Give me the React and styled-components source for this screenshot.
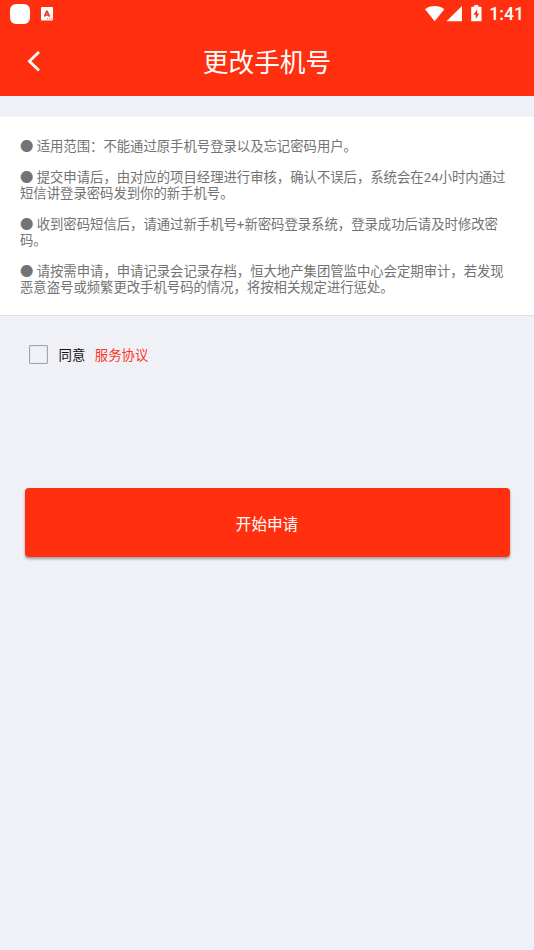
import React, { useState } from "react";
import styled, { createGlobalStyle } from "styled-components";

const GlobalStyle = createGlobalStyle`
  * {
    box-sizing: border-box;
  }

  body {
    margin: 0;
    background: #eff1f6;
    font-family: Roboto, "Noto Sans CJK SC", sans-serif;
  }
`;

const Page = styled.div`
  height: 950px;
  background: #eff1f6;
  overflow: hidden;
`;

const Header = styled.header`
  height: 96px;
  background: #ff2f0f;
  color: #fff;
`;

const StatusBar = styled.div`
  height: 27px;
  padding: 0 10px;
  display: flex;
  justify-content: space-between;
`;

const StatusGroup = styled.div`
  display: flex;
  align-items: center;
`;

const AppDot = styled.span`
  width: 20px;
  height: 20px;
  margin-right: 11px;
  border-radius: 6px;
  background: #fff;
`;

const Clock = styled.span`
  margin-left: 6px;
  padding-top: 1px;
  font-size: 17.6px;
  line-height: 27px;
  font-weight: 500;
`;

const NavBar = styled.div`
  height: 69px;
  display: grid;
  grid-template-columns: 60px 1fr 60px;
  align-items: center;
`;

const BackButton = styled.button`
  height: 40px;
  padding: 0 0 2px 26px;
  border: none;
  background: none;
  color: inherit;
  display: flex;
  align-items: center;
`;

const Title = styled.h1`
  margin: 0;
  padding-top: 2px;
  font-size: 25.7px;
  line-height: 40px;
  font-weight: 400;
  text-align: center;
`;

const Notice = styled.section`
  height: 200px;
  margin-top: 20px;
  padding: 22px 20px 0;
  background: #fff;
  border-top: 1px solid #f3f4f7;
  border-bottom: 1px solid #dfe0e4;
`;

const Rule = styled.p`
  margin: 0 0 15.63px;
  color: #737373;
  font-size: 13.35px;
  line-height: 15.63px;
  white-space: nowrap;
`;

const Agreement = styled.div`
  height: 20px;
  margin: 29px 0 0 29px;
  display: flex;
  align-items: flex-start;
  font-size: 13.4px;
  line-height: 22px;
`;

const Checkbox = styled.button`
  width: 19px;
  height: 19px;
  padding: 0;
  margin-right: 10.5px;
  border: 1px solid #a2a4a8;
  border-radius: 1px;
  background: ${({ $checked }) => ($checked ? "#ff2f0f" : "transparent")};
  box-shadow: inset 0 0 1px #a2a4a8;
`;

const AgreeText = styled.span`
  color: #111;
`;

const AgreeLink = styled.a`
  margin-left: 9.5px;
  color: #fb3524;
`;

const SubmitButton = styled.button`
  display: block;
  width: 485px;
  height: 69px;
  margin: 123px auto 0;
  padding: 0;
  border: none;
  border-radius: 4px;
  background: #ff2f0f;
  box-shadow: 0 2px 3px rgba(0, 0, 0, 0.35);
  color: #fff;
  font-family: inherit;
  font-size: 15.6px;
`;

const rules = [
  ["适用范围：不能通过原手机号登录以及忘记密码用户。"],
  [
    "提交申请后，由对应的项目经理进行审核，确认不误后，系统会在24小时内通过",
    "短信讲登录密码发到你的新手机号。",
  ],
  [
    "收到密码短信后，请通过新手机号+新密码登录系统，登录成功后请及时修改密",
    "码。",
  ],
  [
    "请按需申请，申请记录会记录存档，恒大地产集团管监中心会定期审计，若发现",
    "恶意盗号或频繁更改手机号码的情况，将按相关规定进行惩处。",
  ],
];

const KeyboardIcon = () => (
  <svg width="12" height="14" viewBox="0 0 12 14">
    <rect width="12" height="13.4" rx="1" fill="#fff" />
    <path
      d="M3.5 9.6 5.7 4.2h.5L8.4 9.6M4.3 8h3.3"
      fill="none"
      stroke="#e5391f"
      strokeWidth="1.6"
      strokeLinejoin="bevel"
    />
    <path d="M6 11.8h1.2M8 11.8h1.2M10 11.8h1.2" stroke="#ff6a50" />
  </svg>
);

const StatusIcons = () => (
  <svg width="58" height="18" viewBox="0 0 58 18" fill="#fff">
    <path d="M0 4.2C5.7-.1 13.6-.1 19.3 4.2L9.7 16.2Z" />
    <path d="M37 .9V16.2H21.5Z" />
    <path d="M49.3 0h4v1.7h2.3q.9 0 .9.9v12.8q0 .9-.9.9h-8.5q-.9 0-.9-.9V2.6q0-.9.9-.9h2.2Z" />
    <path d="M52.2 4.2 48.5 9.8h2.2v4.3L54.4 8.5h-2.2Z" fill="#ff2f0f" />
  </svg>
);

const BackIcon = () => (
  <svg width="16" height="22" viewBox="0 0 16 22" fill="none">
    <path d="M13 2 3.4 11.2 13 20.4" stroke="#fff" strokeWidth="2.8" />
  </svg>
);

const App = () => {
  const [agreed, setAgreed] = useState(false);

  return (
    <Page>
      <GlobalStyle />
      <Header>
        <StatusBar>
          <StatusGroup>
            <AppDot />
            <KeyboardIcon />
          </StatusGroup>
          <StatusGroup>
            <StatusIcons />
            <Clock>1:41</Clock>
          </StatusGroup>
        </StatusBar>
        <NavBar>
          <BackButton aria-label="返回">
            <BackIcon />
          </BackButton>
          <Title>更改手机号</Title>
        </NavBar>
      </Header>
      <Notice>
        {rules.map((lines, index) => (
          <Rule key={index}>
            ● {lines[0]}
            {lines[1] && <br />}
            {lines[1]}
          </Rule>
        ))}
      </Notice>
      <Agreement>
        <Checkbox
          role="checkbox"
          aria-checked={agreed}
          aria-label="同意"
          $checked={agreed}
          onClick={() => setAgreed(!agreed)}
        />
        <AgreeText>同意</AgreeText>
        <AgreeLink>服务协议</AgreeLink>
      </Agreement>
      <SubmitButton>开始申请</SubmitButton>
    </Page>
  );
};

export default App;
